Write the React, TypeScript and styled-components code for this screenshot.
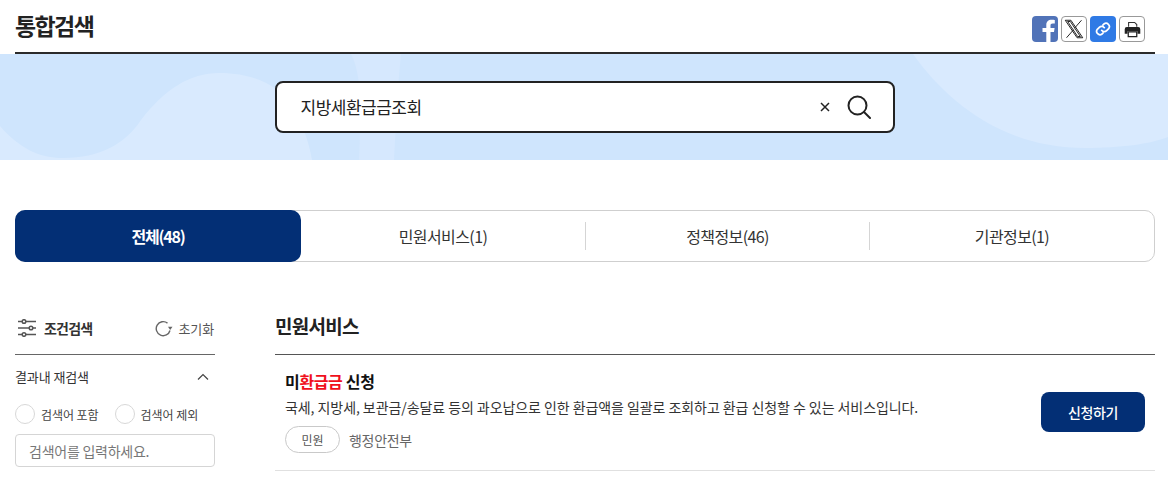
import React from "react";
import styled, { createGlobalStyle } from "styled-components";

const GlobalStyle = createGlobalStyle`
  html, body {
    margin: 0;
    padding: 0;
    background: #fff;
    overflow: hidden;
  }
  body {
    font-family: "Noto Sans CJK KR", "Noto Sans", sans-serif;
    color: #1e1e1e;
  }
  * { box-sizing: border-box; }
`;

const Page = styled.div`
  width: 1168px;
  height: 479px;
  overflow: hidden;
`;

const Header = styled.header`
  height: 54px;
  margin: 0 13px 0 15px;
  border-bottom: 2px solid #2b2b2b;
  display: flex;
  justify-content: space-between;
  align-items: flex-start;
`;

const Title = styled.h1`
  margin: 7px 0 0;
  font-size: 23px;
  line-height: 36px;
  font-weight: 700;
  letter-spacing: -1.6px;
  color: #222;
`;

const ShareRow = styled.div`
  display: flex;
  gap: 3px;
  margin-top: 16px;
  margin-right: 10px;
`;

const ShareButton = styled.span<{ $bg?: string }>`
  width: 26px;
  height: 26px;
  border-radius: 4px;
  overflow: hidden;
  display: flex;
  align-items: center;
  justify-content: center;
  background: ${(p) => p.$bg || "#fff"};
  border: ${(p) => (p.$bg ? "none" : "1px solid #999")};
`;

const Hero = styled.section`
  position: relative;
  height: 106px;
  background: #cfe5fd;
  overflow: hidden;
  display: flex;
  justify-content: center;
  padding-top: 27px;
`;

const HeroShapes = styled.svg`
  position: absolute;
  inset: 0;
`;

const SearchBox = styled.div`
  position: relative;
  width: 620px;
  height: 52px;
  background: #fff;
  border: 2px solid #222;
  border-radius: 8px;
  display: flex;
  align-items: center;
  padding: 0 22px 0 24px;
  margin-left: 1px;
`;

const SearchText = styled.span`
  flex: 1;
  font-size: 17px;
  letter-spacing: -0.5px;
  color: #222;
  padding-bottom: 2px;
`;

const ClearIcon = styled.svg`
  margin-right: 17px;
`;

const Tabs = styled.nav`
  margin: 50px 13px 0 15px;
  height: 52px;
  border: 1px solid #cfcfcf;
  border-radius: 10px;
  display: grid;
  grid-template-columns: 285px 284px 284px 1fr;
  align-items: center;
`;

const Tab = styled.div<{ $active?: boolean; $divider?: boolean }>`
  position: relative;
  height: ${(p) => (p.$active ? "52px" : "auto")};
  margin: ${(p) => (p.$active ? "-1px 0 -1px -1px" : "0")};
  display: flex;
  align-items: center;
  justify-content: center;
  font-size: 16px;
  letter-spacing: ${(p) => (p.$active ? "-1.2px" : "-0.6px")};
  font-weight: ${(p) => (p.$active ? 700 : 400)};
  color: ${(p) => (p.$active ? "#fff" : "#333")};
  background: ${(p) => (p.$active ? "#032f75" : "transparent")};
  border-radius: ${(p) => (p.$active ? "10px" : "0")};
  line-height: 28px;
  border-left: ${(p) => (p.$divider ? "1px solid #d5d5d5" : "none")};
`;

const Body = styled.div`
  margin: 48px 13px 0 15px;
  display: grid;
  grid-template-columns: 200px 1fr;
  column-gap: 60px;
`;

const Sidebar = styled.aside``;

const FilterHead = styled.div`
  height: 45px;
  border-bottom: 1px solid #666;
  display: flex;
  align-items: center;
  padding: 0 1px 8px 3px;
`;

const FilterTitle = styled.strong`
  flex: 1;
  margin-left: 8px;
  font-size: 14px;
  font-weight: 700;
  letter-spacing: -0.8px;
  color: #333;
`;

const Reset = styled.span`
  display: flex;
  align-items: center;
  gap: 5px;
  font-size: 13px;
  letter-spacing: -0.1px;
  color: #555;
`;

const SectionRow = styled.div`
  height: 44px;
  display: flex;
  align-items: center;
  justify-content: space-between;
  font-size: 13px;
  letter-spacing: -0.1px;
  color: #333;
  padding: 0 6px 2px 0;
`;

const RadioRow = styled.div`
  display: flex;
  gap: 16px;
  margin-top: 5px;
  height: 20px;
`;

const RadioLabel = styled.label`
  display: flex;
  align-items: center;
  gap: 6px;
  font-size: 12px;
  letter-spacing: -0.05px;
  color: #444;
`;

const RadioDot = styled.span`
  width: 20px;
  height: 20px;
  border-radius: 50%;
  border: 1px solid #d8d8d8;
  background: #fff;
`;

const FilterInput = styled.div`
  height: 33px;
  margin-top: 10px;
  border: 1px solid #d5d5d5;
  border-radius: 4px;
  padding: 0 13px;
  display: flex;
  align-items: center;
  font-size: 14px;
  color: #777;
  letter-spacing: -0.25px;
`;

const Results = styled.main``;

const ResultsTitle = styled.h2`
  margin: 0;
  height: 45px;
  border-bottom: 1px solid #555;
  font-size: 19px;
  line-height: 32px;
  font-weight: 700;
  letter-spacing: -0.7px;
  color: #222;
`;

const ResultItem = styled.article`
  height: 116px;
  border-bottom: 1px solid #e0e0e0;
  padding: 0 10px;
  display: flex;
  align-items: flex-start;
  justify-content: space-between;
`;

const ResultInfo = styled.div`
  display: flex;
  flex-direction: column;
  padding-top: 14px;
`;

const ResultTitle = styled.h3`
  margin: 0;
  font-size: 16px;
  line-height: 24px;
  font-weight: 700;
  letter-spacing: -0.35px;
  color: #111;
`;

const Highlight = styled.em`
  font-style: normal;
  color: #f0101c;
`;

const ResultDesc = styled.p`
  margin: 3px 0 0;
  font-size: 14px;
  line-height: 22px;
  letter-spacing: -0.07px;
  color: #333;
`;

const MetaRow = styled.div`
  display: flex;
  align-items: center;
  gap: 9px;
  margin-top: 8px;
`;

const Pill = styled.span`
  width: 55px;
  height: 27px;
  border: 1px solid #c9c9c9;
  border-radius: 14px;
  display: flex;
  align-items: center;
  justify-content: center;
  font-size: 12px;
  color: #555;
`;

const Agency = styled.span`
  font-size: 14px;
  letter-spacing: -0.3px;
  color: #666;
`;

const ApplyButton = styled.button`
  width: 104px;
  height: 40px;
  margin-top: 37px;
  border: none;
  border-radius: 8px;
  background: #032f75;
  color: #fff;
  font-family: inherit;
  font-size: 14px;
  font-weight: 500;
  letter-spacing: -0.4px;
`;

const App = () => (
  <Page>
    <GlobalStyle />
    <Header>
      <Title>통합검색</Title>
      <ShareRow>
        <ShareButton $bg="#5173b8">
          <svg width="26" height="26" viewBox="0 0 26 26">
            <path
              d="M18.500 26v-10h3.500l.6-4h-4.100V9.600c0-1.300.5-2.100 2.300-2.100h2V3.900c-.5-.1-1.800-.2-3.200-.2-3.200 0-5.300 1.900-5.300 5.300V12H10.500v4h3.800v10z"
              fill="#fff"
            />
          </svg>
        </ShareButton>
        <ShareButton>
          <svg width="20" height="20" viewBox="0 0 24 24">
            <path
              d="M1.500 1.500h6.800l14.200 21h-6.800z M21 1.500l-8.400 9.500 M3 22.500l8.600-9.700 M4.400 3l11.900 18h3.300L7.600 3z"
              fill="none"
              stroke="#111"
              strokeWidth="1.100"
            />
          </svg>
        </ShareButton>
        <ShareButton $bg="#2f7ae5">
          <svg width="16" height="16" viewBox="0 0 24 24" fill="none" stroke="#fff" strokeWidth="2.600" strokeLinecap="round">
            <path d="M10 14a5 5 0 0 0 7.500.5l3-3a5 5 0 0 0-7-7l-1.700 1.700" />
            <path d="M14 10a5 5 0 0 0-7.500-.5l-3 3a5 5 0 0 0 7 7l1.700-1.700" />
          </svg>
        </ShareButton>
        <ShareButton>
          <svg width="17" height="17" viewBox="0 0 24 24">
            <path d="M6.500 8V2h8.500l3 3v3" fill="#fff" stroke="#333" strokeWidth="1.500" />
            <path d="M4 8.500h16a3 3 0 0 1 3 3V18h-4v-3.500H5V18H1v-6.500a3 3 0 0 1 3-3z" fill="#222" />
            <path d="M6 15.500h12V22H6z" fill="#fff" stroke="#222" strokeWidth="1.800" />
          </svg>
        </ShareButton>
      </ShareRow>
    </Header>

    <Hero>
      <HeroShapes width="1168" height="106" viewBox="0 0 1168 106">
        <path
          d="M0 72C20 95 40 104 63 104C100 104 125 90 141 66C165 35 190 19 219 19C245 19 262 26 273 33C295 50 308 80 312 106H0z"
          fill="#d9eafe"
        />
        <path d="M351 0C356 10 360 25 360 50C360 75 360 90 359 106H394C396 70 398 30 401 0z" fill="#d6e8fe" />
        <path d="M913 0C945 45 1000 94 1086 94C1120 94 1150 90 1168 83V0z" fill="#d9eafe" />
      </HeroShapes>
      <SearchBox>
        <SearchText>지방세환급금조회</SearchText>
        <ClearIcon width="10" height="10" viewBox="0 0 10 10">
          <path d="M1 1l8 8M9 1l-8 8" stroke="#222" strokeWidth="1.500" />
        </ClearIcon>
        <svg width="24" height="24" viewBox="0 0 24 24" fill="none" stroke="#222" strokeWidth="2">
          <circle cx="10.500" cy="10.500" r="9" />
          <path d="M17 17l6 6" strokeLinecap="round" />
        </svg>
      </SearchBox>
    </Hero>

    <Tabs>
      <Tab $active>전체(48)</Tab>
      <Tab>민원서비스(1)</Tab>
      <Tab $divider>정책정보(46)</Tab>
      <Tab $divider>기관정보(1)</Tab>
    </Tabs>

    <Body>
      <Sidebar>
        <FilterHead>
          <svg width="18" height="18" viewBox="0 0 18 18" fill="none" stroke="#555" strokeWidth="1.500">
            <path d="M0 2.500h4M8 2.500h10M0 9h11M15 9h3M0 15.500h4M8 15.500h10" />
            <circle cx="6" cy="2.500" r="1.800" />
            <circle cx="13" cy="9" r="1.800" />
            <circle cx="6" cy="15.500" r="1.800" />
          </svg>
          <FilterTitle>조건검색</FilterTitle>
          <Reset>
            <svg width="18" height="17" viewBox="0 0 18 17" fill="none">
              <path d="M15 10.500A7 7 0 1 1 12.500 3.100" stroke="#666" strokeWidth="1.400" />
              <path d="M13 6.800h4.500L15.200 10z" fill="#666" />
            </svg>
            초기화
          </Reset>
        </FilterHead>
        <SectionRow>
          결과내 재검색
          <svg width="12" height="7" viewBox="0 0 12 7" fill="none" stroke="#444" strokeWidth="1.200">
            <path d="M1 6.500l5-5 5 5" />
          </svg>
        </SectionRow>
        <RadioRow>
          <RadioLabel>
            <RadioDot />
            검색어 포함
          </RadioLabel>
          <RadioLabel>
            <RadioDot />
            검색어 제외
          </RadioLabel>
        </RadioRow>
        <FilterInput>검색어를 입력하세요.</FilterInput>
      </Sidebar>

      <Results>
        <ResultsTitle>민원서비스</ResultsTitle>
        <ResultItem>
          <ResultInfo>
            <ResultTitle>
              미<Highlight>환급금</Highlight> 신청
            </ResultTitle>
            <ResultDesc>
              국세, 지방세, 보관금/송달료 등의 과오납으로 인한 환급액을 일괄로 조회하고 환급 신청할 수 있는 서비스입니다.
            </ResultDesc>
            <MetaRow>
              <Pill>민원</Pill>
              <Agency>행정안전부</Agency>
            </MetaRow>
          </ResultInfo>
          <ApplyButton>신청하기</ApplyButton>
        </ResultItem>
      </Results>
    </Body>
  </Page>
);

export default App;
